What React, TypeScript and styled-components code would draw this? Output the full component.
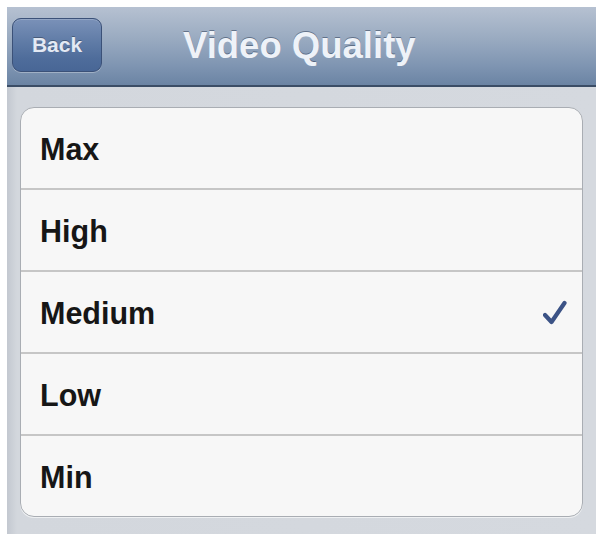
import React from "react";
import styled, { createGlobalStyle } from "styled-components";

const Global = createGlobalStyle`
  html, body { margin: 0; padding: 0; background: #ffffff; }
  body { font-family: "Liberation Sans", Arial, sans-serif; }
`;

const Frame = styled.div`
  box-sizing: border-box;
  width: 601px;
  height: 534px;
  padding: 7px 5px 0 7px;
  background: #ffffff;
  display: flex;
`;

const Screen = styled.div`
  flex: 1;
  display: flex;
  flex-direction: column;
  background: linear-gradient(90deg, #c3c8d0 0px, #d3d7dd 10px, #d5d9df 100%);
`;

const NavBar = styled.div`
  box-sizing: border-box;
  height: 80px;
  display: flex;
  align-items: center;
  position: relative;
  padding: 0 5px;
  background: linear-gradient(180deg, #b6c1d1 0%, #9aabc1 40%, #7f95b2 75%, #6b84a4 100%);
  border-bottom: 2px solid #3b4d66;
`;

const BackButton = styled.div`
  box-sizing: border-box;
  width: 90px;
  height: 54px;
  margin-top: -2px;
  border-radius: 9px;
  border: 1px solid #3b5178;
  background: linear-gradient(180deg, #7a91b8 0%, #5f7ba6 45%, #4f6d9b 75%, #48669394 100%), #48669a;
  box-shadow: 0 1px 0 rgba(255, 255, 255, 0.3), inset 0 1px 0 rgba(255, 255, 255, 0.2);
  display: flex;
  align-items: center;
  justify-content: center;
  color: #e3e9f3;
  font-weight: bold;
  font-size: 21px;
  text-shadow: 0 -1px 0 rgba(0, 0, 0, 0.3);
`;

const Title = styled.div`
  position: absolute;
  left: 176px;
  top: 18px;
  color: #eef2f8;
  font-weight: bold;
  font-size: 36.5px;
  text-shadow: 0 -1px 0 rgba(40, 55, 80, 0.5);
`;

const Body = styled.div`
  flex: 1;
  padding: 20px 13px 0 13px;
`;

const Card = styled.div`
  box-sizing: border-box;
  height: 410px;
  background: #f7f7f7;
  border-radius: 14px;
  border: 1px solid #a9adb3;
  box-shadow: 0 1px 0 #eef0f2;
  display: flex;
  flex-direction: column;
  overflow: hidden;
`;

const Row = styled.div<{ $last?: boolean }>`
  flex: 1;
  display: flex;
  align-items: center;
  justify-content: space-between;
  padding: 2px 15px 0 19px;
  border-bottom: ${(p) => (p.$last ? "none" : "2px solid #c6c6c6")};
  font-weight: bold;
  font-size: 30.5px;
  color: #161616;
`;

const Check = () => (
  <svg width="24" height="26" viewBox="0 0 24 26">
    <path
      d="M2 15 L8.5 22 L21.5 3"
      fill="none"
      stroke="#3c5386"
      strokeWidth="4.2"
      strokeLinecap="round"
      strokeLinejoin="round"
    />
  </svg>
);

const items = ["Max", "High", "Medium", "Low", "Min"];

export default function App() {
  return (
    <>
      <Global />
      <Frame>
        <Screen>
          <NavBar>
            <BackButton>Back</BackButton>
            <Title>Video Quality</Title>
          </NavBar>
          <Body>
            <Card>
              {items.map((it, i) => (
                <Row key={it} $last={i === items.length - 1}>
                  <span>{it}</span>
                  {it === "Medium" && <Check />}
                </Row>
              ))}
            </Card>
          </Body>
        </Screen>
      </Frame>
    </>
  );
}
